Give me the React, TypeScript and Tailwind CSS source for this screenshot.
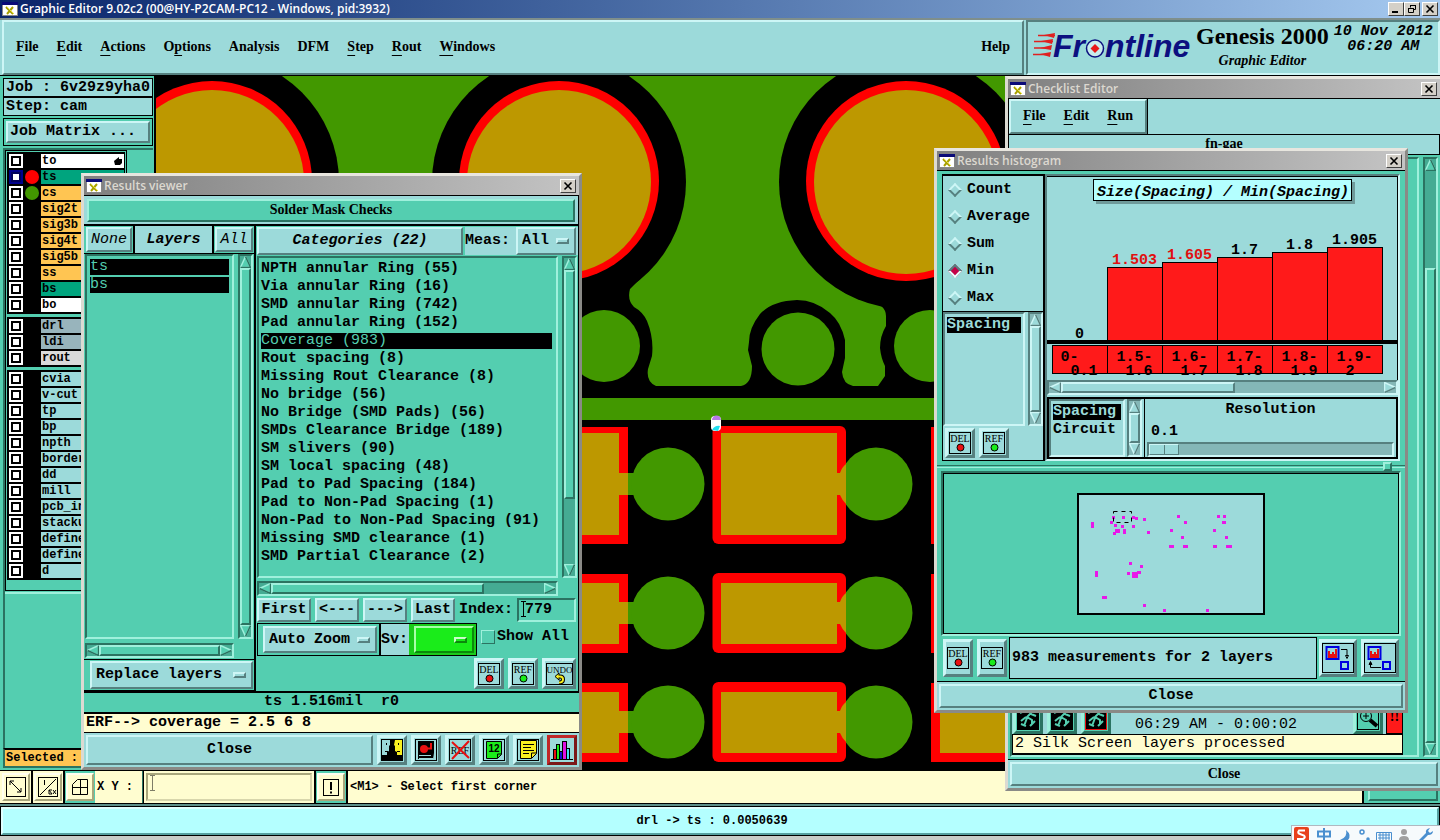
import type { ReactNode } from "react";

const MONO = "font-['Liberation_Mono',monospace] text-[15px] leading-[18px] font-bold";
const MONO_SM = "font-['Liberation_Mono',monospace] text-[12px] leading-[16px] font-bold";
const SERIF = "font-['Liberation_Serif',serif] text-[14px] leading-[18px] font-bold";
const CAPTION = "font-['Open_Sans',sans-serif] text-[12px] leading-[16px] font-semibold";

const CYAN_UP = "border-2 border-t-[#cdf6f6] border-l-[#cdf6f6] border-r-[#56807f] border-b-[#56807f] bg-[#9cdada]";
const CYAN_DOWN = "border-2 border-t-[#56807f] border-l-[#56807f] border-r-[#cdf6f6] border-b-[#cdf6f6] bg-[#9cdada]";
const TEAL_UP = "border-2 border-t-[#9ff0dc] border-l-[#9ff0dc] border-r-[#2b7361] border-b-[#2b7361] bg-[#54ceb0]";
const TEAL_DOWN = "border-2 border-t-[#2b7361] border-l-[#2b7361] border-r-[#9ff0dc] border-b-[#9ff0dc] bg-[#54ceb0]";
const CREAM_UP = "border-2 border-t-[#fffff0] border-l-[#fffff0] border-r-[#a8a67c] border-b-[#a8a67c] bg-[#fffdd0]";
const WINDOW = "absolute flex flex-col border-[3px] border-t-[#e8e6df] border-l-[#dcdad2] border-r-[#8a8a86] border-b-[#8a8a86] bg-[#54ceb0]";

function AppIcon() {
  return (
    <svg width="16" height="14" viewBox="0 0 16 14" className="shrink-0" aria-hidden="true">
      <rect width="16" height="14" fill="#888" />
      <rect x="1" y="1" width="14" height="12" fill="#fff" />
      <rect width="16" height="3" fill="#0a0a78" />
      <path d="M4 5l7 7M5 12l6-7" stroke="#a8a000" strokeWidth="2" />
      <path d="M5 5l7 7" stroke="#e8e040" strokeWidth="1" />
    </svg>
  );
}

function CaptionButton({ kind }: { kind: "min" | "restore" | "close" }) {
  return (
    <button
      aria-label={kind}
      className="flex h-[14px] w-[16px] items-center justify-center border border-t-white border-l-white border-r-[#404040] border-b-[#404040] bg-[#d4d0c8]"
    >
      <svg width="12" height="10" viewBox="0 0 12 10" fill="none" stroke="#000">
        {kind === "min" && <path d="M2 8h6" strokeWidth="2" />}
        {kind === "restore" && <path d="M4.500 3.500v-2h5v4h-2M4 1.500h6M2.500 4.500h5v4h-5zM2 4.500h6" />}
        {kind === "close" && <path d="M2.500 1.500l7 7M9.500 1.500l-7 7" strokeWidth="1.600" />}
      </svg>
    </button>
  );
}

function WindowCaption({ title }: { title: string }) {
  return (
    <div className="flex h-[20px] shrink-0 items-center gap-[2px] border-b border-black bg-linear-to-r from-[#808080] to-[#c4c4c4] pr-[3px] pl-[2px]">
      <AppIcon />
      <span className={`${CAPTION} flex-1 text-[#dcd8d0]`}>{title}</span>
      <CaptionButton kind="close" />
    </div>
  );
}

function Arrow({ dir, cyan }: { dir: "up" | "down" | "left" | "right"; cyan?: boolean }) {
  const lite = cyan ? "#cdf6f6" : "#9ff0dc";
  const dark = cyan ? "#56807f" : "#2b7361";
  const face = cyan ? "#9cdada" : "#54ceb0";
  const shape = {
    up: "M5.500 0.500L10.500 11.500H0.500Z",
    down: "M0.500 0.500H10.500L5.500 11.500Z",
    left: "M0.500 5.500L11.500 0.500V10.500Z",
    right: "M11.500 5.500L0.500 0.500V10.500Z",
  }[dir];
  const shade = {
    up: "M5.500 0.500L10.500 11.500H0.500",
    down: "M10.500 0.500L5.500 11.500",
    left: "M11.500 0.500V10.500L0.500 5.500",
    right: "M11.500 5.500L0.500 10.500",
  }[dir];
  const tall = dir === "up" || dir === "down";
  return (
    <svg width={tall ? 11 : 12} height={tall ? 12 : 11} className="shrink-0" aria-hidden="true">
      <path d={shape} fill={face} stroke={lite} strokeWidth="1.500" />
      <path d={shade} fill="none" stroke={dark} strokeWidth="1.500" />
    </svg>
  );
}

function Scrollbar({
  axis,
  cyan,
  start = 0,
  size = 100,
  className = "",
}: {
  axis: "x" | "y";
  cyan?: boolean;
  start?: number;
  size?: number;
  className?: string;
}) {
  const vertical = axis === "y";
  const well = cyan
    ? "border-t-[#56807f] border-l-[#56807f] border-r-[#cdf6f6] border-b-[#cdf6f6] bg-[#84b7b7]"
    : "border-t-[#2b7361] border-l-[#2b7361] border-r-[#9ff0dc] border-b-[#9ff0dc] bg-[#45ab93]";
  return (
    <div className={`flex shrink-0 border-2 ${vertical ? "w-[15px] flex-col" : "h-[15px]"} ${well} ${className}`}>
      <Arrow dir={vertical ? "up" : "left"} cyan={cyan} />
      <div className={`flex min-h-0 min-w-0 flex-1 ${vertical ? "flex-col" : ""}`}>
        <div style={{ flexBasis: `${start}%` }} className="shrink-0" />
        <div style={{ flexBasis: `${size}%` }} className={cyan ? CYAN_UP : TEAL_UP} />
      </div>
      <Arrow dir={vertical ? "down" : "right"} cyan={cyan} />
    </div>
  );
}

function OptionMenu({ label, value, green, className = "" }: { label: string; value: string; green?: boolean; className?: string }) {
  const face = green
    ? "border-2 border-t-[#a8ffa8] border-l-[#a8ffa8] border-r-[#0b8a0b] border-b-[#0b8a0b] bg-[#1aec1a]"
    : CYAN_UP;
  return (
    <div className={`relative flex ${face} ${className}`}>
      <select aria-label={label} className={`${MONO} w-full appearance-none bg-transparent pl-[4px] text-black outline-none`}>
        <option>{value}</option>
      </select>
      <span
        className={`pointer-events-none absolute top-1/2 right-[5px] h-[6px] w-[13px] -translate-y-1/2 ${
          green ? "border-2 border-t-[#c8ffc8] border-l-[#c8ffc8] border-r-[#0b8a0b] border-b-[#0b8a0b]" : CYAN_UP
        }`}
      />
    </div>
  );
}

function MenuLabel({ text, hot }: { text: string; hot?: number }) {
  return (
    <button className={`${SERIF} whitespace-nowrap`}>
      {hot === undefined ? (
        text
      ) : (
        <>
          {text.slice(0, hot)}
          <span className="underline decoration-1 underline-offset-4">{text[hot]}</span>
          {text.slice(hot + 1)}
        </>
      )}
    </button>
  );
}

function IconButton({ label, className = "", face = CYAN_UP, children }: { label: string; className?: string; face?: string; children: ReactNode }) {
  return (
    <button aria-label={label} className={`flex shrink-0 items-center justify-center border-[3px] ${face} ${className}`}>
      {children}
    </button>
  );
}

function TagIcon({ tag, mark }: { tag: string; mark: "red" | "green" | "undo" | "cross" }) {
  const wide = mark === "undo" ? 27 : 22;
  return (
    <svg width={wide} height="22" viewBox={`0 0 ${wide} 22`}>
      <rect x="0.500" y="0.500" width={wide - 1} height="21" fill="none" stroke="#000" />
      <text
        x={wide / 2}
        y={mark === "cross" ? 15 : 10}
        textAnchor="middle"
        fontFamily="Liberation Serif, serif"
        fontSize={mark === "undo" ? 9 : 10}
      >
        {tag}
      </text>
      {mark === "red" && <circle cx="11.500" cy="15.500" r="3.500" fill="#e81010" stroke="#000" />}
      {mark === "green" && <circle cx="11.500" cy="15.500" r="3.500" fill="#1aec1a" stroke="#000" />}
      {mark === "undo" && (
        <>
          <path d="M12 13.500h2q3 0 3 3t-4 3" fill="none" stroke="#000" strokeWidth="4" />
          <path d="M9 13.500l4-3.500v7z" fill="#f8f020" stroke="#000" />
          <path d="M12 13.500h2q3 0 3 3t-4 3" fill="none" stroke="#f8f020" strokeWidth="2" />
        </>
      )}
      {mark === "cross" && <path d="M3 3l17 16M20 2L3 20" stroke="#e81010" strokeWidth="2" />}
    </svg>
  );
}

/* ---------- application frame ---------- */

function Logo() {
  return (
    <svg width="164" height="44" viewBox="1032 27 164 44" className="shrink-0" role="img" aria-label="Frontline">
      <g stroke="#e02020" strokeWidth="1.500">
        <path d="M1038 36.500h17M1034 42.500h19M1034 49h17M1033 55.500h17" />
      </g>
      <path d="M1044 36l11-2-1 5zM1041 42l12-2-1 5zM1040 49l12-3-1 5zM1040 55l11-2-1 5z" fill="#e02020" />
      <g fontFamily="Liberation Sans, sans-serif" fontStyle="italic" fontWeight="bold" fontSize="32" fill="#0c1080">
        <text x="1053" y="58">Fr</text>
        <text x="1105" y="58">ntline</text>
      </g>
      <circle cx="1095" cy="49.500" r="8.500" fill="#c8ecec" stroke="#0c1080" strokeWidth="1.500" />
      <path d="M1095 45l4.500 4.500-4.500 4.500-4.500-4.500z" fill="#e81818" />
    </svg>
  );
}

const MENUS: [string, number?][] = [
  ["File", 0],
  ["Edit", 0],
  ["Actions", 0],
  ["Options", 1],
  ["Analysis"],
  ["DFM"],
  ["Step", 0],
  ["Rout", 0],
  ["Windows", 0],
];

function TopBar() {
  return (
    <header className="shrink-0">
      <div className="flex h-[18px] items-center gap-[2px] bg-linear-to-r from-[#0a246a] to-[#a6caf0] pr-[2px] pl-[2px]">
        <AppIcon />
        <h1 className={`${CAPTION} flex-1 text-white`}>Graphic Editor 9.02c2 (00@HY-P2CAM-PC12 - Windows, pid:3932)</h1>
        <div className="flex">
          <CaptionButton kind="min" />
          <CaptionButton kind="restore" />
        </div>
        <CaptionButton kind="close" />
      </div>
      <div className="flex h-[58px] border-t-2 border-b border-t-[#7f8f8c] border-b-black bg-[#9cdada] pl-[2px]">
        <nav className={`flex flex-1 items-center gap-[18px] px-[12px] pb-[2px] ${CYAN_UP}`}>
          {MENUS.map(([text, hot]) => (
            <MenuLabel key={text} text={text} hot={hot} />
          ))}
          <span className="flex-1" />
          <MenuLabel text="Help" />
        </nav>
        <div className={`ml-[2px] flex w-[414px] items-center pl-[4px] ${CYAN_DOWN}`}>
          <Logo />
          <div className="flex flex-col items-center font-['Liberation_Serif',serif] font-bold text-black">
            <span className="text-[24px] leading-[26px] whitespace-nowrap">Genesis 2000</span>
            <span className="text-[14px] leading-[24px] italic">Graphic Editor</span>
          </div>
          <div className={`${MONO} flex h-full flex-1 flex-col items-center pt-[2px] italic`}>
            <span className="leading-[15px] whitespace-nowrap">10 Nov 2012</span>
            <span className="leading-[15px]">06:20 AM</span>
          </div>
        </div>
      </div>
    </header>
  );
}

type Layer = { name: string; tone: string; dot?: string; current?: boolean };

const WHITE = "bg-white";
const GREEN = "bg-[#00a47e]";
const AMBER = "bg-[#ffc552]";
const SLATE = "bg-[#98b4bc]";
const CYAN = "bg-[#9cdada]";

const LAYER_GROUPS: Layer[][] = [
  [
    { name: "to", tone: WHITE, current: true },
    { name: "ts", tone: GREEN, dot: "bg-[#ff0000]" },
    { name: "cs", tone: AMBER, dot: "bg-[#429800]" },
    { name: "sig2t", tone: AMBER },
    { name: "sig3b", tone: AMBER },
    { name: "sig4t", tone: AMBER },
    { name: "sig5b", tone: AMBER },
    { name: "ss", tone: AMBER },
    { name: "bs", tone: GREEN },
    { name: "bo", tone: WHITE },
  ],
  [
    { name: "drl", tone: SLATE },
    { name: "ldi", tone: SLATE },
    { name: "rout", tone: "bg-[#dadada]" },
  ],
  [
    { name: "cvia", tone: CYAN },
    { name: "v-cut", tone: CYAN },
    { name: "tp", tone: CYAN },
    { name: "bp", tone: CYAN },
    { name: "npth", tone: CYAN },
    { name: "border", tone: CYAN },
    { name: "dd", tone: CYAN },
    { name: "mill", tone: CYAN },
    { name: "pcb_in", tone: CYAN },
    { name: "stacku", tone: CYAN },
    { name: "define", tone: CYAN },
    { name: "define", tone: CYAN },
    { name: "d", tone: CYAN },
  ],
];

function LayerRow({ layer }: { layer: Layer }) {
  const active = layer.name === "ts";
  return (
    <label className="flex h-[16px] items-center">
      <input
        type="checkbox"
        aria-label={`Show ${layer.name}`}
        className={`size-[14px] shrink-0 appearance-none border-2 bg-white ${
          active ? "border-[#00008c] shadow-[inset_0_0_0_2px_#00005a]" : "border-white shadow-[inset_0_0_0_2px_#000]"
        }`}
      />
      <span className="flex w-[18px] shrink-0 justify-center">
        {layer.dot && <span className={`size-[14px] rounded-full ${layer.dot}`} />}
      </span>
      <span className={`${MONO_SM} flex h-[14px] flex-1 items-center justify-between pr-[2px] pl-[1px] leading-[14px] ${layer.tone}`}>
        {layer.name}
        {layer.current && (
          <svg width="8" height="8" viewBox="0 0 8 8" aria-hidden="true">
            <path d="M0 4L5 0V2H8V6L6 8H1Z" fill="#000" />
          </svg>
        )}
      </span>
    </label>
  );
}

function LayerPanel() {
  return (
    <aside className="flex w-[156px] shrink-0 flex-col border-r-2 border-black bg-[#54ceb0] pt-[2px] pr-px pl-[3px]">
      <div className={`${MONO} h-[19px] border border-black bg-[#9cdada] pl-[2px] whitespace-nowrap`}>Job : 6v29z9yha0</div>
      <div className={`${MONO} h-[19px] border border-black bg-[#9cdada] pl-[2px]`}>Step: cam</div>
      <div className="mt-[2px] flex h-[28px] border border-black p-[2px]">
        <button className={`${MONO} flex flex-1 items-center pl-[2px] ${CYAN_UP}`}>Job Matrix ...</button>
      </div>
      <div className="mt-[2px] flex-1 border-t-2 border-l-2 border-[#2b7361]">
        <div className="w-[122px] border border-black p-px">
          <div className="flex flex-col gap-[3px]">
            {LAYER_GROUPS.map((group, i) => (
              <div key={i} className="bg-black p-[1px] pl-[2px]">
                {group.map((layer, j) => (
                  <LayerRow key={j} layer={layer} />
                ))}
              </div>
            ))}
          </div>
          <div className="h-[9px]" />
        </div>
        <div className="mt-px border-t-2 border-[#9ff0dc]" />
      </div>
      <div className={`${MONO_SM} mb-[2px] h-[20px] border-2 border-t-[#000] border-[#2b7361] bg-[#ffc552] pl-[1px]`}>Selected :</div>
    </aside>
  );
}

const PADS = [
  { top: 427, bottom: 544, goldTop: 433, goldBottom: 535, cy: 484 },
  { top: 574, bottom: 653, goldTop: 583, goldBottom: 644, cy: 613 },
  { top: 683, bottom: 762, goldTop: 692, goldBottom: 753, cy: 722 },
];

function BoardCanvas() {
  return (
    <svg viewBox="156 76 1284 694" preserveAspectRatio="xMinYMin slice" className="h-full min-w-0 flex-1 bg-black" role="img" aria-label="Board view">
      <rect x="156" y="76" width="1284" height="694" fill="#000" />
      <rect x="156" y="76" width="854" height="110" fill="#429800" />
      <path
        d="M610 182H835V286L845 293L870 301Q886 305 886 316V326Q880 336 880 348Q881 358 885 366V376L878 386H853Q843 384 842 372L845 358V340Q841 322 830 313Q815 300 797 300Q772 301 760 314Q749 328 749 342L748 350L752 366Q752 384 741 386H656Q646 382 648 369L652 356Q654 338 647 321Q643 312 634 307Q627 300 630 289L640 279L610 260Z"
        fill="#429800"
      />
      {[212, 559, 906].map((cx) => (
        <g key={cx}>
          <circle cx={cx} cy="182" r="127" fill="#000" />
          <circle cx={cx} cy="181" r="100" fill="#f00" />
          <circle cx={cx} cy="182" r="92" fill="#bd9800" />
        </g>
      ))}
      <g fill="#429800">
        <circle cx="604" cy="346" r="36" />
        <circle cx="798" cy="349" r="36.500" />
        <circle cx="930" cy="346" r="36" />
        <rect x="156" y="398" width="854" height="22" />
      </g>
      {PADS.map((p) => (
        <g key={p.cy}>
          <rect x="500" y={p.top} width="128" height={p.bottom - p.top} fill="#f00" />
          <rect x="500" y={p.goldTop} width="119" height={p.goldBottom - p.goldTop} fill="#bd9800" />
          <rect x="619" y={p.cy - 11} width="9" height="22" fill="#bd9800" />
          <rect x="628" y={p.cy - 11} width="8" height="22" fill="#429800" />
          <circle cx="668" cy={p.cy} r="36.500" fill="#429800" />
          <circle cx="876" cy={p.cy} r="36.500" fill="#429800" />
          <rect x="712.500" y={p.top - 1} width="133.500" height={p.bottom - p.top + 1} rx="6" fill="#f00" />
          <rect x="721" y={p.goldTop} width="116" height={p.goldBottom - p.goldTop} fill="#bd9800" />
          <path d={`M837 ${p.cy - 11}h3q2-6 6-9v40q-4-4-6-9h-3z`} fill="#bd9800" />
          <rect x="931" y={p.top} width="90" height={p.bottom - p.top} fill="#f00" />
          <rect x="940" y={p.goldTop} width="81" height={p.goldBottom - p.goldTop} fill="#bd9800" />
        </g>
      ))}
      <rect x="711" y="416" width="10" height="15" rx="4" fill="#fff" />
      <path d="M712 420a4 4 0 0 1 9 0z" fill="#b878e8" />
      <path d="M712 430q3-5 8-4l-2 5z" fill="#20e0f0" />
    </svg>
  );
}

function TextCursor({ className }: { className: string }) {
  return (
    <svg width="5" height="16" className={`pointer-events-none absolute ${className}`} fill="none" stroke="#000" aria-hidden="true">
      <path d="M0 0.500h5M0 15.500h5M2.500 1v14" />
    </svg>
  );
}

function CommandBar() {
  const icon = "flex size-[28px] items-center justify-center";
  return (
    <div className="flex h-[34px] shrink-0 items-stretch border-y border-black bg-[#fffdd0] pl-px">
      <div className="flex items-center border-r-2 border-black px-px">
        <button aria-label="Diagonal" className={`${icon} ${CREAM_UP}`}>
          <svg width="20" height="20" fill="none" stroke="#000">
            <rect x="0.500" y="0.500" width="19" height="19" />
            <path d="M4 4l11 11M4 8V4h4M15 11v4h-4" />
          </svg>
        </button>
      </div>
      <div className="flex items-center border-r-2 border-black px-px">
        <button aria-label="Units" className={`${icon} ${CREAM_UP}`}>
          <svg width="20" height="20" fill="none" stroke="#000">
            <rect x="0.500" y="0.500" width="19" height="19" />
            <path d="M2 18L18 2M6.500 3v5M11 13l3 4M14 13h-3v4h3M15 13l3 4M18 13l-3 4" />
          </svg>
        </button>
      </div>
      <div className="flex items-center bg-[#54ceb0] px-px">
        <button aria-label="Grid" className={`${icon} ${CREAM_UP}`}>
          <svg width="18" height="18" fill="none" stroke="#000">
            <path d="M1.500 6.500l5-5h10v15h-15zM1 9.500h16M9.500 1v16" />
          </svg>
        </button>
      </div>
      <label htmlFor="xy" className={`${MONO_SM} flex w-[48px] items-center border-r border-[#2b7361] pl-[2px] whitespace-pre`}>
        X Y :
      </label>
      <div className="relative flex border-r-2 border-l border-black p-[2px]">
        <input id="xy" className="w-[166px] border-2 border-t-[#a8a67c] border-l-[#a8a67c] border-r-[#d8d6ac] border-b-[#d8d6ac] bg-[#fffdd0] px-1 outline-none" />
        <TextCursor className="top-[4px] left-[6px] opacity-50" />
      </div>
      <div className="flex items-center border-r-2 border-black bg-[#54ceb0] px-px">
        <button aria-label="Info" className={`${icon} ${CREAM_UP}`}>
          <svg width="16" height="17" fill="none" stroke="#000">
            <rect x="0.500" y="0.500" width="15" height="16" />
            <path d="M8 3v8M8 12.500v2" strokeWidth="2" />
          </svg>
        </button>
      </div>
      <div className={`${MONO_SM} flex flex-1 items-center pl-[2px]`}>&lt;M1&gt; - Select first corner</div>
      <div className="flex border-l-2 border-black bg-[#54ceb0] p-[2px] pl-[4px]">
        <button className={`${MONO_SM} w-[70px] ${TEAL_UP}`}>Abort</button>
      </div>
    </div>
  );
}

function InputMethodBar() {
  return (
    <div className="absolute right-0 bottom-0 h-[15px] w-[149px] overflow-hidden border-t border-l border-[#b0b8c0] bg-[#f6fafc]">
      <svg width="148" height="14" viewBox="0 0 148 14" fill="none" stroke="#4a8fcf" strokeWidth="1.500" aria-hidden="true">
        <rect x="2" y="1" width="15" height="18" rx="2" fill="#e8401c" stroke="none" />
        <path d="M13 4.500H7q-2 2.500 1 3.500l4 1.500q2 2-1 3.500H5" stroke="#fff" strokeWidth="2" />
        <path d="M26 5.500h12v5H26zM32 2v12" strokeWidth="2" />
        <path d="M54 4q2 7-6 10h8q4-5-2-10z" fill="#4a8fcf" stroke="none" />
        <circle cx="70" cy="6" r="2" />
        <circle cx="76" cy="13" r="1" fill="#4a8fcf" />
        <path d="M84.500 6.500h15v8h-15zM86 9h12M86 12h12M88 7v7M91 7v7M94 7v7M97 7v7" strokeWidth="1" />
        <circle cx="112" cy="6" r="3" fill="#a0a0a0" stroke="none" />
        <path d="M107 14q0-4 5-4t5 4z" fill="#a0a0a0" stroke="none" />
        <path d="M127 14l7-7q-1-4 4-5l-2 3 2 2 3-2q0 4-5 4l-5 5z" fill="#4a8fcf" stroke="none" />
      </svg>
    </div>
  );
}

/* ---------- results viewer ---------- */

const CATEGORIES = [
  "NPTH annular Ring (55)",
  "Via annular Ring (16)",
  "SMD annular Ring (742)",
  "Pad annular Ring (152)",
  "Coverage (983)",
  "Rout spacing (8)",
  "Missing Rout Clearance (8)",
  "No bridge (56)",
  "No Bridge (SMD Pads) (56)",
  "SMDs Clearance Bridge (189)",
  "SM slivers (90)",
  "SM local spacing (48)",
  "Pad to Pad Spacing (184)",
  "Pad to Non-Pad Spacing (1)",
  "Non-Pad to Non-Pad Spacing (91)",
  "Missing SMD clearance (1)",
  "SMD Partial Clearance (2)",
];

function ListItem({ text, selected, cyan }: { text: string; selected?: boolean; cyan?: boolean }) {
  return (
    <li className="h-[18px] py-[1px]">
      <span className={`block h-[16px] leading-[16px] ${selected ? (cyan ? "bg-black text-[#9cdada]" : "bg-black font-normal text-[#54ceb0]") : ""}`}>{text}</span>
    </li>
  );
}

function LayersColumn() {
  return (
    <section className="flex w-[172px] shrink-0 flex-col border-r-2 border-black">
      <div className="flex h-[28px] border-b border-black">
        <div className="flex w-[51px] border-r-2 border-black p-[1px] pl-[2px]">
          <button className={`${MONO} flex-1 font-normal italic ${CYAN_UP}`}>None</button>
        </div>
        <div className={`${MONO} flex flex-1 items-center justify-center bg-[#9cdada] italic`}>Layers</div>
        <div className="flex w-[42px] border-l-2 border-black p-[1px]">
          <button className={`${MONO} flex-1 font-normal italic ${CYAN_UP}`}>All</button>
        </div>
      </div>
      <div className="flex flex-1 gap-[4px] px-[1px]">
        <div className="flex min-w-0 flex-1 flex-col gap-[4px]">
          <ul className={`${MONO} flex-1 px-[3px] pt-[2px] ${TEAL_DOWN}`}>
            <ListItem text="ts" selected />
            <ListItem text="bs" selected />
          </ul>
          <Scrollbar axis="x" />
        </div>
        <Scrollbar axis="y" className="mb-[19px]" />
      </div>
      <div className="mt-[1px] flex h-[32px] border-y border-black p-[1px] pl-[6px]">
        <OptionMenu label="Layer mode" value="Replace layers" className="flex-1" />
      </div>
    </section>
  );
}

function CategoriesColumn() {
  return (
    <section className="flex min-w-0 flex-1 flex-col pl-[1px]">
      <div className="flex h-[30px] py-[1px]">
        <button className={`${MONO} w-[206px] italic ${CYAN_UP}`}>Categories (22)</button>
        <div className="ml-[2px] flex flex-1 items-center justify-between bg-[#9cdada] pr-[2px]">
          <span className={MONO}>Meas:</span>
          <OptionMenu label="Measurements" value="All" className="h-[28px] w-[60px]" />
        </div>
      </div>
      <div className="flex min-h-0 flex-1 gap-[4px] pr-[1px]">
        <div className="flex min-w-0 flex-1 flex-col gap-[3px]">
          <ul className={`${MONO} flex-1 overflow-hidden px-[2px] pt-[2px] pr-[4px] whitespace-nowrap ${TEAL_DOWN}`}>
            {CATEGORIES.map((text) => (
              <ListItem key={text} text={text} selected={text.startsWith("Coverage")} />
            ))}
          </ul>
          <Scrollbar axis="x" size={78} />
        </div>
        <Scrollbar axis="y" size={78} className="mb-[18px]" />
      </div>
      <div className="mt-[2px] flex h-[24px] items-stretch gap-[4px] pr-[2px]">
        <button className={`${MONO} w-[54px] ${CYAN_UP}`}>First</button>
        <button className={`${MONO} w-[44px] ${CYAN_UP}`}>&lt;---</button>
        <button className={`${MONO} w-[44px] ${CYAN_UP}`}>---&gt;</button>
        <button className={`${MONO} w-[44px] ${CYAN_UP}`}>Last</button>
        <label htmlFor="index" className={`${MONO} flex items-center`}>
          Index:
        </label>
        <div className="relative flex min-w-0 flex-1">
          <input id="index" defaultValue="779" className={`${MONO} w-full min-w-0 pl-[6px] outline-none ${TEAL_DOWN}`} />
          <TextCursor className="top-[3px] left-[4px]" />
        </div>
      </div>
      <div className="mt-[1px] flex h-[33px] items-center">
        <div className="flex h-full w-[124px] border border-r-2 border-black p-[2px] pl-[5px]">
          <OptionMenu label="Zoom mode" value="Auto Zoom" className="flex-1" />
        </div>
        <div className={`${MONO} flex h-full w-[28px] items-center border-y border-black bg-[#9cdada]`}>Sv:</div>
        <div className="flex h-full w-[68px] border border-l-0 border-black bg-[#1acc1a] p-[2px] pl-[5px]">
          <OptionMenu label="Severity" value="" green className="flex-1" />
        </div>
        <label className={`${MONO} flex items-center gap-[2px] pb-[5px] pl-[4px]`}>
          <input type="checkbox" className="size-[14px] appearance-none border border-t-[#9ff0dc] border-l-[#9ff0dc] border-r-[#2b7361] border-b-[#2b7361]" />
          Show All
        </label>
      </div>
      <div className="my-[2px] flex h-[31px] justify-end gap-[4px] pr-[2px]">
        <IconButton label="Delete" className="w-[30px]">
          <TagIcon tag="DEL" mark="red" />
        </IconButton>
        <IconButton label="Reference" className="w-[30px]">
          <TagIcon tag="REF" mark="green" />
        </IconButton>
        <IconButton label="Undo" className="w-[34px]">
          <TagIcon tag="UNDO" mark="undo" />
        </IconButton>
      </div>
    </section>
  );
}

function ResultsViewer() {
  return (
    <section className={`${WINDOW} top-[173px] left-[81px] h-[597px] w-[501px]`}>
      <WindowCaption title="Results viewer" />
      <div className="h-[28px] shrink-0 border-r border-black bg-[#9cdada] p-[3px] pb-[2px]">
        <div className={`${SERIF} h-full text-center ${TEAL_UP}`}>Solder Mask Checks</div>
      </div>
      <div className="flex min-h-0 flex-1 border-y-2 border-r border-black">
        <LayersColumn />
        <CategoriesColumn />
      </div>
      <div className={`${MONO} h-[19px] shrink-0 text-center whitespace-pre`}>ts 1.516mil  r0</div>
      <div className={`${MONO} h-[21px] shrink-0 border-t-2 border-b border-black bg-[#fffdd0] pl-[2px]`}>ERF--&gt; coverage = 2.5 6 8</div>
      <div className="flex h-[34px] shrink-0 gap-[4px] bg-[#9cdada] px-[2px] py-[2px]">
        <button className={`${MONO} flex-1 ${CYAN_UP}`}>Close</button>
        <IconButton label="Compare" className="w-[30px]">
          <svg width="22" height="22">
            <rect width="22" height="22" fill="#000" />
            <path d="M1 1h8v5l-1 1v5l-2 1v3H1z" fill="#9cdada" />
            <path d="M14 1h7v15h-5v-3l-2-1V7l-1-1z" fill="#f8f020" />
            <path d="M5.500 4v2M17.500 4v2M4 12.500h3M16 12.500h3" stroke="#000" />
          </svg>
        </IconButton>
        <IconButton label="Snapshot" className="w-[30px]">
          <svg width="22" height="22">
            <rect x="0.500" y="0.500" width="21" height="21" fill="none" stroke="#000" />
            <path d="M3 2h16v12l-1 6H3z" fill="#000" />
            <circle cx="9" cy="10" r="4" fill="#e81010" />
            <path d="M9 9.500h7V4" stroke="#e81010" strokeWidth="2" fill="none" />
            <path d="M4 16.500h12M4 19.500h14" stroke="#9cdada" />
          </svg>
        </IconButton>
        <IconButton label="Clear reference" className="w-[30px]">
          <TagIcon tag="REF" mark="cross" />
        </IconButton>
        <IconButton label="Renumber" className="w-[30px]">
          <svg width="22" height="22">
            <rect x="0.500" y="0.500" width="21" height="21" fill="none" stroke="#000" />
            <path d="M3.500 2.500h15v13l-4 4h-11zM14.500 19v-4h4" fill="#1aec1a" stroke="#000" />
            <text x="11" y="13" textAnchor="middle" fontFamily="Liberation Sans, sans-serif" fontSize="10" fontWeight="bold">
              12
            </text>
          </svg>
        </IconButton>
        <IconButton label="Notes" className="w-[30px]">
          <svg width="22" height="22" stroke="#000">
            <rect x="0.500" y="0.500" width="21" height="21" fill="none" />
            <path d="M3.500 1.500h16v13l-5 5h-11zM14.500 19v-5h5" fill="#f8f020" />
            <path d="M6 5.500h11M6 8.500h8M6 11.500h11M6 14.500h6" />
          </svg>
        </IconButton>
        <IconButton
          label="Histogram"
          className="w-[30px]"
          face="border-[3px] border-t-[#c02828] border-l-[#c02828] border-r-[#7c1818] border-b-[#7c1818] bg-[#9cdada]"
        >
          <svg width="22" height="22" stroke="#000">
            <path d="M0 20.500h22" />
            <rect x="2.500" y="10.500" width="3" height="10" fill="#e81010" />
            <rect x="5.500" y="5.500" width="3" height="15" fill="#1aec1a" />
            <rect x="8.500" y="12.500" width="3" height="8" fill="#1010d0" />
            <rect x="11.500" y="2.500" width="4" height="18" fill="#e010e0" />
            <rect x="15.500" y="9.500" width="3" height="11" fill="#40e0f0" />
          </svg>
        </IconButton>
      </div>
    </section>
  );
}

/* ---------- results histogram ---------- */

const BINS = [
  { from: "0-", to: "0.1", value: "0", height: 0 },
  { from: "1.5-", to: "1.6", value: "1.503", height: 73, alert: true },
  { from: "1.6-", to: "1.7", value: "1.605", height: 78, alert: true },
  { from: "1.7-", to: "1.8", value: "1.7", height: 83 },
  { from: "1.8-", to: "1.9", value: "1.8", height: 88 },
  { from: "1.9-", to: "2", value: "1.905", height: 93 },
];

function HistogramChart() {
  return (
    <svg viewBox="0 0 350 203" className="block w-full" role="img" aria-label="Minimum spacing per size bin">
      <rect x="49" y="5" width="259" height="22" fill="#6f9a9a" />
      <rect x="46.500" y="2.500" width="258" height="21" fill="#b4ffff" stroke="#000" />
      <g fontFamily="Liberation Mono, monospace" fontSize="15" fontWeight="bold">
        <text x="50" y="19" fontStyle="italic">
          Size(Spacing) / Min(Spacing)
        </text>
        {BINS.map((b, i) => {
          const x = 5.5 + i * 55;
          return (
            <g key={b.from}>
              {b.height > 0 && <rect x={x} y={163.5 - b.height} width="55" height={b.height} fill="#ff1a1a" stroke="#000" />}
              <text x={x + 27} y={(b.height ? 160 : 161) - b.height} textAnchor="middle" fill={b.alert ? "#e01010" : "#000"}>
                {b.value}
              </text>
              <rect x={x} y="168.500" width="55" height="28" fill="#ff1a1a" stroke="#000" />
              <text x={x + (i ? 9 : 8)} y="184">
                {b.from}
              </text>
              <text x={x + 18} y="198">
                {b.to}
              </text>
            </g>
          );
        })}
      </g>
      <rect y="163" width="350" height="4" fill="#000" />
    </svg>
  );
}

const POINTS = [
  [12, 27, 3, 6], [33, 21, 3, 3], [43, 21, 3, 3], [53, 21, 3, 3], [56, 22, 3, 3], [64, 23, 3, 3], [31, 26, 3, 3],
  [35, 29, 3, 3], [42, 30, 3, 3], [53, 30, 3, 3], [36, 34, 5, 4], [34, 37, 3, 3], [44, 34, 3, 5], [68, 36, 3, 3],
  [98, 20, 3, 3], [105, 26, 3, 3], [91, 34, 3, 3], [102, 41, 3, 3], [90, 50, 5, 3], [104, 50, 5, 3],
  [138, 20, 3, 3], [144, 20, 3, 3], [143, 26, 4, 3], [134, 34, 3, 3], [146, 41, 3, 3], [134, 50, 4, 3], [147, 50, 6, 3],
  [50, 67, 3, 3], [61, 70, 3, 3], [16, 76, 3, 6], [48, 77, 3, 3], [53, 77, 6, 6], [58, 76, 4, 3],
  [23, 101, 5, 3], [64, 109, 3, 3], [84, 114, 3, 3], [127, 114, 3, 3],
];

function LinkChartIcon({ back }: { back?: boolean }) {
  return (
    <svg width="32" height="30" viewBox="0 0 32 30" fill="none">
      <rect x="0.500" y="0.500" width="31" height="29" stroke="#000" />
      <rect x="4.500" y="4" width="12" height="12" fill="#9cdada" stroke="#0000e0" strokeWidth="2" />
      <path d="M6 15V8h2v3h2V9h2v2h1V6h2v9z" fill="#e81010" />
      <rect x="19" y="19" width="7" height="7" stroke="#0000e0" strokeWidth="2" />
      {back ? (
        <path d="M17 24.500H6.500V19M5 21.500l1.500-3 1.500 3z" stroke="#000" />
      ) : (
        <path d="M19 6.500h6V12M23.500 12.500h3l-1.500 3z" stroke="#000" />
      )}
    </svg>
  );
}

function ResultsHistogram() {
  return (
    <section className={`${WINDOW} top-[148px] right-[32px] h-[565px] w-[474px]`}>
      <WindowCaption title="Results histogram" />
      <div className="flex h-[290px] shrink-0 px-[5px] pt-[3px]">
        <div className="flex w-[103px] shrink-0 flex-col border border-r-2 border-t-2 border-black bg-[#9cdada]">
          <div className="flex flex-col border-b border-black">
            {["Count", "Average", "Sum", "Min", "Max"].map((name) => (
              <label key={name} className={`${MONO} flex h-[27px] items-center gap-[7px] pl-[7px]`}>
                <input
                  type="radio"
                  name="measure"
                  defaultChecked={name === "Min"}
                  className="size-[10px] shrink-0 rotate-45 appearance-none border-2 border-t-[#cdf6f6] border-l-[#cdf6f6] border-r-[#56807f] border-b-[#56807f] checked:border-t-[#56807f] checked:border-l-[#56807f] checked:border-r-[#e8ffff] checked:border-b-[#e8ffff] checked:bg-[#c40048]"
                />
                {name}
              </label>
            ))}
          </div>
          <div className="flex min-h-0 flex-1 gap-[3px]">
            <ul className={`${MONO} min-w-0 flex-1 px-[2px] pt-[2px] ${CYAN_DOWN}`}>
              <ListItem text="Spacing" selected cyan />
            </ul>
            <Scrollbar axis="y" cyan />
          </div>
          <div className="flex h-[34px] items-center gap-[4px] pl-[2px]">
            <IconButton label="Delete" className="h-[30px] w-[30px]">
              <TagIcon tag="DEL" mark="red" />
            </IconButton>
            <IconButton label="Reference" className="h-[30px] w-[30px]">
              <TagIcon tag="REF" mark="green" />
            </IconButton>
          </div>
        </div>
        <div className="flex min-w-0 flex-1 flex-col border-2 border-t-[#56807f] border-l-[#56807f] border-r-[#cdf6f6] border-b-[#cdf6f6] bg-[#9cdada]">
          <div className="flex-1 border-t border-r border-black">
            <HistogramChart />
          </div>
          <Scrollbar axis="x" cyan size={54} />
          <div className="mt-[2px] flex h-[63px] border-2 border-black">
            <ul className={`${MONO} w-[76px] px-[2px] pt-[2px] ${CYAN_DOWN}`}>
              <ListItem text="Spacing" selected cyan />
              <ListItem text="Circuit" />
            </ul>
            <Scrollbar axis="y" cyan className="ml-[2px]" />
            <div className={`${MONO} ml-[2px] flex flex-1 flex-col border-l border-black px-[2px] pt-[2px]`}>
              <label htmlFor="resolution" className="block text-center">
                Resolution
              </label>
              <output className="mt-[4px] block pl-[4px]" htmlFor="resolution">
                0.1
              </output>
              <div className="relative mt-[1px] h-[15px] border-2 border-t-[#56807f] border-l-[#56807f] border-r-[#cdf6f6] border-b-[#cdf6f6] bg-[#84b7b7]">
                <input
                  id="resolution"
                  type="range"
                  defaultValue="0"
                  className="block h-[11px] w-full appearance-none bg-transparent [&::-webkit-slider-thumb]:h-[11px] [&::-webkit-slider-thumb]:w-[30px] [&::-webkit-slider-thumb]:appearance-none [&::-webkit-slider-thumb]:border [&::-webkit-slider-thumb]:border-t-[#cdf6f6] [&::-webkit-slider-thumb]:border-l-[#cdf6f6] [&::-webkit-slider-thumb]:border-r-[#56807f] [&::-webkit-slider-thumb]:border-b-[#56807f] [&::-webkit-slider-thumb]:bg-[#9cdada] [&::-webkit-slider-thumb]:bg-[linear-gradient(90deg,transparent_14px,#56807f_14px,#56807f_15px,transparent_15px)]"
                />
              </div>
            </div>
          </div>
        </div>
      </div>
      <div className="flex h-[10px] shrink-0 items-center">
        <div className="h-[3px] flex-1 border-t border-b border-t-[#2b7361] border-b-[#9ff0dc]" />
        <div className={`size-[9px] ${TEAL_UP}`} />
        <div className="h-[3px] w-[13px] border-t border-b border-t-[#2b7361] border-b-[#9ff0dc]" />
      </div>
      <div className={`mx-[4px] flex min-h-0 flex-1 ${TEAL_DOWN}`}>
        <div className="flex flex-1 items-center justify-center border border-black">
          <svg width="188" height="122" viewBox="-2 -2 188 122" role="img" aria-label="Measurement locations">
            <rect x="-1" y="-1" width="186" height="120" fill="#9cdada" stroke="#000" strokeWidth="2" />
            {POINTS.map(([x, y, w, h], i) => (
              <rect key={i} x={x} y={y} width={w} height={h} fill="#e818e8" />
            ))}
            <rect x="34.500" y="16.500" width="18" height="11" fill="none" stroke="#000" strokeDasharray="4 4" />
          </svg>
        </div>
      </div>
      <div className="flex h-[46px] shrink-0 items-center gap-[4px] border-b border-black px-[6px] pb-[1px]">
        <IconButton label="Delete" className="h-[38px] w-[30px]">
          <TagIcon tag="DEL" mark="red" />
        </IconButton>
        <IconButton label="Reference" className="h-[38px] w-[30px]">
          <TagIcon tag="REF" mark="green" />
        </IconButton>
        <div className={`${MONO} -ml-[2px] flex h-[42px] flex-1 items-center border border-black bg-[#9cdada] pl-[2px]`}>
          983 measurements for 2 layers
        </div>
        <IconButton label="Detach chart" className="-ml-[2px] h-[38px] w-[38px]">
          <LinkChartIcon />
        </IconButton>
        <IconButton label="Attach chart" className="h-[38px] w-[38px]">
          <LinkChartIcon back />
        </IconButton>
      </div>
      <div className="flex h-[28px] shrink-0 bg-[#9cdada] p-[2px]">
        <button className={`${MONO} flex-1 ${CYAN_UP}`}>Close</button>
      </div>
    </section>
  );
}

/* ---------- checklist editor ---------- */

function RunIcon({ accent }: { accent?: string }) {
  return (
    <svg width="22" height="22">
      <rect width="22" height="22" fill="#000" stroke={accent ?? "#000"} strokeWidth="2" />
      <path d="M3 5l6-3 5 3-4 4 5 3v5M9 9l-5 4M10 10l-3 8M14 6l5 2M4 16l5 2M13 18l5-5" fill="none" stroke="#54ceb0" strokeWidth="2" />
    </svg>
  );
}

function ChecklistEditor() {
  return (
    <section className={`${WINDOW} top-[76px] right-0 h-[715px] w-[435px] border-r-0`}>
      <WindowCaption title="Checklist Editor" />
      <div className="flex h-[35px] shrink-0 bg-[#9cdada] pl-[1px]">
        <nav className={`flex items-center gap-[18px] px-[12px] pb-[2px] outline outline-black ${CYAN_UP}`}>
          <MenuLabel text="File" hot={0} />
          <MenuLabel text="Edit" hot={0} />
          <MenuLabel text="Run" hot={0} />
        </nav>
      </div>
      <div className={`${SERIF} h-[21px] shrink-0 border border-black bg-[#9cdada] text-center`}>fn-gae</div>
      <div className="flex min-h-0 flex-1 gap-[4px] p-[2px]">
        <div className={`flex flex-1 flex-col justify-end pr-[14px] ${TEAL_DOWN}`}>
          <div className="flex h-[46px] items-end bg-[#9cdada] pl-[1px]">
            <div className="flex gap-[4px]">
              <IconButton label="Run action" className="size-[30px]" face={TEAL_UP}>
                <RunIcon />
              </IconButton>
              <IconButton label="Run marked" className="size-[30px]" face={TEAL_UP}>
                <RunIcon />
              </IconButton>
              <IconButton label="Run all" className="size-[30px]" face={TEAL_UP}>
                <RunIcon accent="#e81010" />
              </IconButton>
            </div>
            <div className={`${MONO} mr-auto ml-6 text-center font-normal`}>
              <div>10 Nov 2012</div>
              <div className="whitespace-nowrap">06:29 AM - 0:00:02</div>
            </div>
            <div className="flex items-end gap-[3px]">
              <IconButton label="View results" className="size-[30px]" face={TEAL_UP}>
                <svg width="22" height="22" fill="none" stroke="#000">
                  <rect x="0.500" y="0.500" width="21" height="21" />
                  <circle cx="9" cy="8" r="5.500" />
                  <path d="M6 8h6M9 5v6" />
                  <path d="M13 12l7 6" strokeWidth="4" />
                </svg>
              </IconButton>
              <div className={`${SERIF} flex h-[34px] w-[17px] items-center justify-center border border-black bg-[#ff1a1a]`}>!!</div>
            </div>
          </div>
          <div className={`${MONO} h-[21px] border border-b-2 border-black bg-[#fffdd0] pl-[2px] font-normal`}>2 Silk Screen layers processed</div>
        </div>
        <Scrollbar axis="y" start={17} size={83} />
      </div>
      <div className="flex h-[29px] shrink-0 border-t border-black bg-[#9cdada] p-[2px]">
        <button className={`${SERIF} flex-1 ${CYAN_UP}`}>Close</button>
      </div>
    </section>
  );
}

export default function App() {
  return (
    <div className="relative flex h-screen flex-col overflow-hidden bg-[#54ceb0] text-black">
      <TopBar />
      <main className="flex min-h-0 flex-1">
        <LayerPanel />
        <BoardCanvas />
      </main>
      <CommandBar />
      <footer className="shrink-0 border-t-2 border-b-4 border-t-[#5e8f8a] border-b-[#c8ccc8] bg-[#d8ffff] p-[1px]">
        <div className={`${MONO_SM} h-[28px] border-2 border-t-[#e0ffff] border-l-[#e0ffff] border-r-[#56a0a0] border-b-[#56a0a0] bg-[#b4ffff] pr-4 text-center leading-[24px] outline outline-black`}>
          drl -&gt; ts : 0.0050639
        </div>
      </footer>
      <ChecklistEditor />
      <ResultsViewer />
      <ResultsHistogram />
      <InputMethodBar />
    </div>
  );
}
